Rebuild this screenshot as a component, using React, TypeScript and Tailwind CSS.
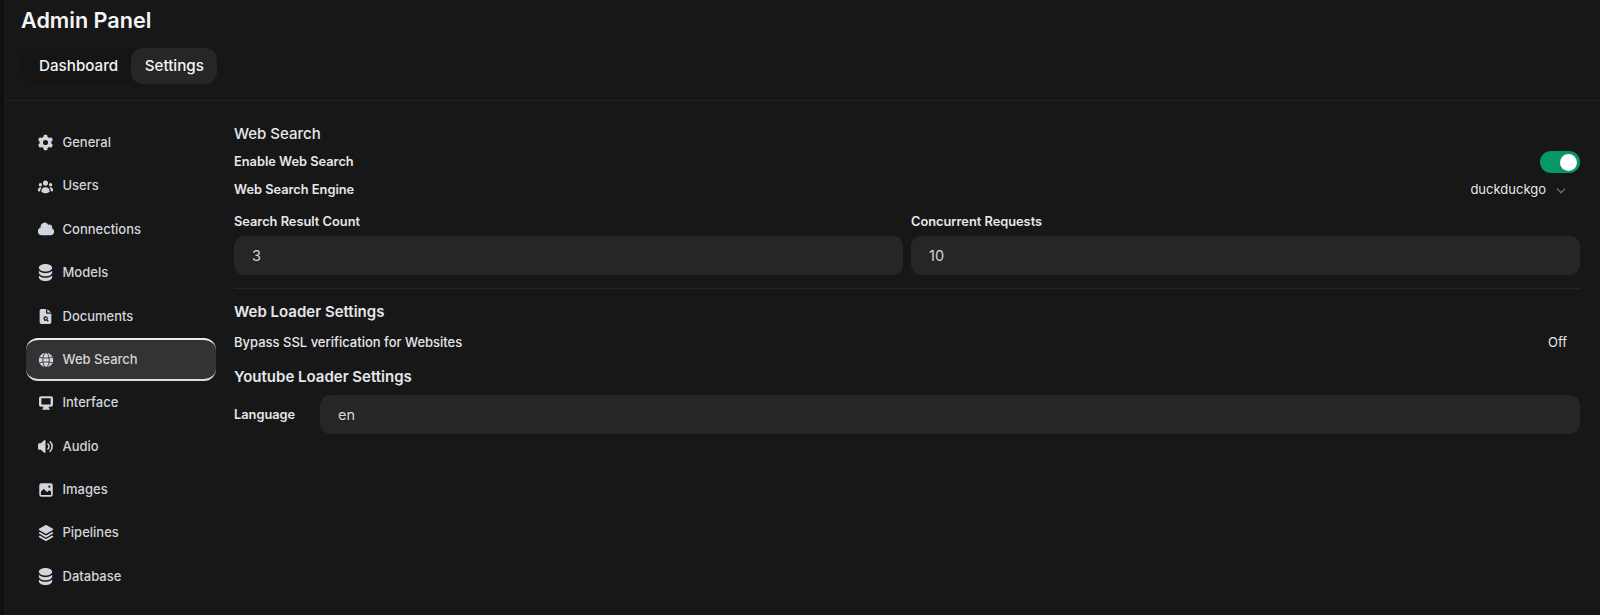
import React from 'react';
import {
  HiMiniCog6Tooth,
  HiMiniUserGroup,
  HiMiniCloud,
  HiMiniCircleStack,
  HiMiniSquare3Stack3D,
  HiMiniChevronDown,
} from 'react-icons/hi2';

function DocumentIcon({ className }: { className?: string }) {
  return (
    <svg viewBox="0 0 16 16" fill="currentColor" className={className}>
      <path
        fillRule="evenodd"
        d="M4 1h4.5v3.2c0 .7.6 1.3 1.3 1.3H13.5v7.8A1.7 1.7 0 0 1 11.8 15H4.2a1.7 1.7 0 0 1-1.7-1.7V2.5A1.5 1.5 0 0 1 4 1Zm4.2 6.8a2.1 2.1 0 1 0 .9 4l1.1 1.1.8-.8-1.1-1.1a2.1 2.1 0 0 0-1.7-3.2Zm0 1.1a1 1 0 1 1 0 2 1 1 0 0 1 0-2Z"
      />
      <path d="M9.7 1.2 13.3 4.3H10.2a.5.5 0 0 1-.5-.5V1.2Z" />
    </svg>
  );
}

function GlobeIcon({ className }: { className?: string }) {
  return (
    <svg viewBox="0 0 16 16" className={className}>
      <circle cx="8" cy="8" r="7.2" fill="currentColor" />
      <g fill="none" stroke="#333333" strokeWidth="0.9">
        <ellipse cx="8" cy="8" rx="3.2" ry="7.2" />
        <path d="M1.6 5.2C5 6.4 11 6.4 14.4 5.2M1.6 10.8C5 9.6 11 9.6 14.4 10.8" />
      </g>
    </svg>
  );
}

function MonitorIcon({ className }: { className?: string }) {
  return (
    <svg viewBox="0 0 16 16" fill="currentColor" className={className}>
      <path
        fillRule="evenodd"
        d="M3 1.2h10A2 2 0 0 1 15 3.2v6.6a2 2 0 0 1-2 2h-2.4l.4 1.6.8.6v.8H4.2v-.8l.8-.6.4-1.6H3a2 2 0 0 1-2-2V3.2a2 2 0 0 1 2-2Zm.4 2v6.4h9.2V3.2H3.4Z"
      />
    </svg>
  );
}

function SpeakerIcon({ className }: { className?: string }) {
  return (
    <svg viewBox="0 0 16 16" fill="currentColor" className={className}>
      <path d="M7.557 2.066A.75.75 0 0 1 8 2.75v10.5a.75.75 0 0 1-1.248.56L3.59 11H2a1 1 0 0 1-1-1V6a1 1 0 0 1 1-1h1.59l3.162-2.81a.75.75 0 0 1 .805-.124ZM12.95 3.05a.75.75 0 1 0-1.06 1.06 5.5 5.5 0 0 1 0 7.78.75.75 0 1 0 1.06 1.06 7 7 0 0 0 0-9.9Z" />
      <path d="M10.828 5.172a.75.75 0 1 0-1.06 1.06 2.5 2.5 0 0 1 0 3.536.75.75 0 1 0 1.06 1.06 4 4 0 0 0 0-5.656Z" />
    </svg>
  );
}

function PhotoIcon({ className }: { className?: string }) {
  return (
    <svg viewBox="0 0 16 16" fill="currentColor" className={className}>
      <path
        fillRule="evenodd"
        d="M2 4a2 2 0 0 1 2-2h8a2 2 0 0 1 2 2v8a2 2 0 0 1-2 2H4a2 2 0 0 1-2-2V4Zm10.5 5.707a.5.5 0 0 0-.146-.353l-1-1a.5.5 0 0 0-.708 0L9.354 9.646a.5.5 0 0 1-.708 0L6.354 7.354a.5.5 0 0 0-.708 0l-2 2a.5.5 0 0 0-.146.353V12a.5.5 0 0 0 .5.5h8a.5.5 0 0 0 .5-.5V9.707ZM12 5a1 1 0 1 1-2 0 1 1 0 0 1 2 0Z"
      />
    </svg>
  );
}

const navItems = [
  { label: 'General', icon: HiMiniCog6Tooth, iconClass: 'size-[17px]' },
  { label: 'Users', icon: HiMiniUserGroup, iconClass: 'size-[17px]' },
  { label: 'Connections', icon: HiMiniCloud, iconClass: 'size-[18px]' },
  { label: 'Models', icon: HiMiniCircleStack, iconClass: 'size-[19px]' },
  { label: 'Documents', icon: DocumentIcon, iconClass: 'size-[17px]' },
  { label: 'Web Search', icon: GlobeIcon, iconClass: 'size-4', active: true },
  { label: 'Interface', icon: MonitorIcon, iconClass: 'size-4' },
  { label: 'Audio', icon: SpeakerIcon, iconClass: 'size-[17px]' },
  { label: 'Images', icon: PhotoIcon, iconClass: 'size-[18px]' },
  { label: 'Pipelines', icon: HiMiniSquare3Stack3D, iconClass: 'size-[18px]' },
  { label: 'Database', icon: HiMiniCircleStack, iconClass: 'size-[19px]' },
];

export default function App() {
  return (
    <div className="flex h-[615px] w-[1600px] overflow-hidden bg-[#171717] font-['Inter',sans-serif] text-gray-200">
      <div className="w-1 shrink-0 bg-[#0f0f0f]" />
      <div className="flex min-w-0 flex-1 flex-col">
        {/* Header */}
        <div className="border-b border-[#222222] pb-4 pl-[17px]">
          <h1 className="pt-[6px] text-[21.6px] leading-7 font-semibold text-gray-100">Admin Panel</h1>
          <div className="mt-[14px] flex w-fit rounded-xl bg-[#151515] text-[15.2px] font-medium text-gray-100">
            <div className="flex h-9 items-center pr-[13px] pl-[18px]">Dashboard</div>
            <div className="flex h-9 items-center rounded-xl bg-[#262626] px-[13.5px]">Settings</div>
          </div>
        </div>

        <div className="flex flex-1 pt-[20px]">
          {/* Sidebar */}
          <nav className="ml-[22px] flex w-[190px] shrink-0 flex-col text-[13px] font-medium text-gray-300">
            {navItems.map(({ label, icon: Icon, iconClass, active }) => (
              <div
                key={label}
                className={
                  active
                    ? 'flex h-[43.4px] items-center rounded-xl border-t-2 border-b-2 border-t-[#eeeeee] border-b-[#dddddd] bg-[#333333] pl-[11.5px]'
                    : 'flex h-[43.4px] items-center pl-[11.5px]'
                }
              >
                <span className="mr-[9px] flex size-4 items-center justify-center">
                  <Icon className={`shrink-0 ${iconClass}`} />
                </span>
                {label}
              </div>
            ))}
          </nav>

          {/* Content */}
          <main className="ml-[18px] flex-1 pt-[3px] pr-[20px] text-[12.8px] font-semibold">
            <h2 className="text-[15px] leading-5 font-medium">Web Search</h2>
            <div className="mt-2 flex h-5 items-center justify-between">
              <span>Enable Web Search</span>
              <span className="flex h-[22px] w-10 items-center justify-end rounded-full bg-[#059669] pr-[3px]">
                <span className="size-[17px] rounded-full bg-white" />
              </span>
            </div>
            <div className="mt-2 flex h-5 items-center justify-between">
              <span>Web Search Engine</span>
              <span className="flex items-center gap-[6px] pr-[10px] text-[13px] font-normal">
                duckduckgo
                <HiMiniChevronDown className="size-[18px] text-gray-500" />
              </span>
            </div>
            <div className="mt-[12px] grid grid-cols-2 gap-2">
              <div>
                <div className="mb-1 leading-5">Search Result Count</div>
                <div className="flex h-[39px] items-center rounded-[10px] bg-[#262626] px-[18px] text-[14.5px] font-normal text-gray-300">3</div>
              </div>
              <div>
                <div className="mb-1 leading-5">Concurrent Requests</div>
                <div className="flex h-[39px] items-center rounded-[10px] bg-[#262626] px-[18px] text-[14.5px] font-normal text-gray-300">10</div>
              </div>
            </div>
            <hr className="my-[13px] border-[#262626]" />
            <h2 className="text-[15px] leading-5 font-semibold">Web Loader Settings</h2>
            <div className="mt-[11px] flex h-5 items-center justify-between">
              <span className="text-[13px] font-medium">Bypass SSL verification for Websites</span>
              <span className="pr-[13px] text-[13px] font-normal">Off</span>
            </div>
            <h2 className="mt-[14px] text-[15px] leading-5 font-semibold">Youtube Loader Settings</h2>
            <div className="mt-2 flex items-center">
              <span className="w-[86px]">Language</span>
              <div className="flex h-[39px] flex-1 items-center rounded-[10px] bg-[#262626] px-[18px] text-[14.5px] font-normal text-gray-300">en</div>
            </div>
          </main>
        </div>
      </div>
    </div>
  );
}
